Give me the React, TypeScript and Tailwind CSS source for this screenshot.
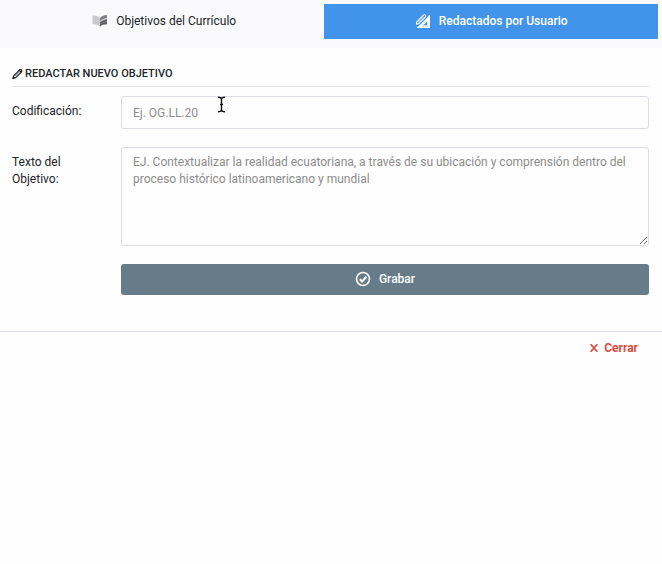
import type { ReactNode } from 'react';

function BookIcon() {
  return (
    <svg viewBox="0 0 16 14" className="w-4 h-3.5" aria-hidden="true">
      <path d="M.5 1.500C3.500 1.500 6 2 8 4v8.500C6 10.800 3.500 10.300.5 10.300z" fill="#c9c9c9" />
      <path d="M8 4c1.700-2 4-2.700 7-3v3C12 4.500 10 5.500 8 7.200z" fill="#808080" />
      <path d="M8 7.200C10 5.500 12 4.500 15 4v1.200C12 5.700 10 6.700 8 8.300z" fill="#c0c0c0" />
      <path d="M8 8.300C10 6.700 12 5.700 15 5.200v5.100C12 10.300 9.800 11 8 12.700z" fill="#5c5c5c" />
      <path d="M8.300 10.300C10.500 8.700 12.500 8 15 7.800" fill="none" stroke="#a0a0a0" strokeWidth="0.600" />
    </svg>
  );
}

function RulerIcon() {
  return (
    <svg viewBox="0 0 16 16" className="w-4 h-4" aria-hidden="true">
      <path fillRule="evenodd" d="M15 1.500V15H1.500zM12.300 8 8.300 12.200h4z" fill="#ffffff" />
      <path d="M1.800 9.300 8.900 2.200a1.300 1.300 0 0 1 1.900 1.900L4.200 10.600l-2.600.9z" fill="#4194ea" stroke="#4194ea" strokeWidth="2.800" />
      <path d="M1.800 8.800 8.400 2.200a1.300 1.300 0 0 1 1.900 1.900L3.900 10.400l-2.500.8z" fill="none" stroke="#ffffff" strokeWidth="1.100" strokeLinejoin="round" />
      <path d="M3.400 9 8.800 3.600" stroke="#ffffff" strokeWidth="0.600" />
      <path d="M12.300 13.600v-.9M10.300 13.600v-.9M8.300 13.600v-.9" stroke="#4194ea" strokeWidth="0.600" />
    </svg>
  );
}

function PencilIcon() {
  return (
    <svg viewBox="0 0 12 12" className="w-3 h-3" fill="none" stroke="#212529" strokeLinejoin="round" aria-hidden="true">
      <path d="M1 10.500 1.700 7.800 7.600 1.900a1.200 1.200 0 0 1 1.900 1.900L3.700 9.700z" strokeWidth="1.200" />
      <path d="M3.300 8.100 7.600 3.800" strokeWidth="0.600" />
      <path d="M6.900 2.600 8.800 4.500 9.500 3.800 7.700 1.900z" fill="#212529" strokeWidth="0.500" />
      <path d="m.700 10.700.6-2L2.700 10.100z" fill="#212529" strokeWidth="0.500" />
    </svg>
  );
}

function CheckIcon() {
  return (
    <svg viewBox="0 0 16 16" className="w-4 h-4" fill="none" stroke="#ffffff" aria-hidden="true">
      <circle cx="8" cy="8" r="6.500" strokeWidth="1.600" />
      <path d="m4.800 8.200 2.300 2.300 4.400-4.700" strokeWidth="2" />
    </svg>
  );
}

function CloseIcon() {
  return (
    <svg viewBox="0 0 8 8" className="w-2 h-2" fill="none" stroke="#df4a40" aria-hidden="true">
      <path d="m.600.200 6.800 7.600M7.400.200.600 7.800" strokeWidth="1.700" />
    </svg>
  );
}

function TextCursor() {
  return (
    <svg viewBox="0 0 9 17" className="absolute left-24 top-0 w-[9px] h-[17px] pointer-events-none" fill="none" stroke="#111111" strokeWidth="1.400" aria-hidden="true">
      <path d="M1 1.200c2 0 3.500.500 3.500 2v10.600c0 1.500-1.500 2-3.500 2M8 1.200c-2 0-3.500.500-3.500 2v10.600c0 1.500 1.500 2 3.500 2M3 8.500h3" />
    </svg>
  );
}

function Tab({ active, icon, children }: { active?: boolean; icon: ReactNode; children: ReactNode }) {
  return (
    <button
      type="button"
      role="tab"
      aria-selected={!!active}
      className={
        active
          ? 'flex h-[35px] items-center justify-center gap-2 bg-[#4194ea] pb-0.5 font-medium text-white'
          : 'flex h-[35px] items-center justify-center gap-2 pb-0.5 text-[#212529]'
      }
    >
      {icon}
      <span>{children}</span>
    </button>
  );
}

export default function App() {
  return (
    <div className="min-h-screen bg-[#fefefe] font-['Roboto',sans-serif] text-xs text-[#212529]">
      {/* Pestañas */}
      <div role="tablist" className="grid grid-cols-[24fr_25fr] bg-[#fafafc] px-1 pt-1 pb-[9px]">
        <Tab icon={<BookIcon />}>Objetivos del Currículo</Tab>
        <Tab active icon={<RulerIcon />}>Redactados por Usuario</Tab>
      </div>

      {/* Formulario */}
      <form className="px-3 pt-4 pb-9" onSubmit={(e) => e.preventDefault()}>
        <h2 className="flex items-center gap-px border-b border-[#e2e4e8] pt-0.5 pb-1 text-[11px] leading-4 font-medium">
          <PencilIcon />
          REDACTAR NUEVO OBJETIVO
        </h2>

        <div className="mt-[9px] grid grid-cols-[109px_1fr] gap-y-[18px] pr-px">
          <label htmlFor="codigo" className="pt-[7px] leading-[17px]">Codificación:</label>
          <div className="relative">
            <input
              id="codigo"
              type="text"
              placeholder="Ej. OG.LL.20"
              className="block h-[33px] w-full rounded-[3px] border border-[#dadce7] px-[11px] outline-none placeholder:text-[#8c8c8c]"
            />
            <TextCursor />
          </div>

          <label htmlFor="texto" className="pt-[7px] pr-12 leading-[17px]">Texto del Objetivo:</label>
          <textarea
            id="texto"
            placeholder="EJ. Contextualizar la realidad ecuatoriana, a través de su ubicación y comprensión dentro del proceso histórico latinoamericano y mundial"
            className="block h-[99px] w-full resize rounded-[3px] border border-[#dadce7] px-[11px] py-1.5 leading-[17px] outline-none placeholder:text-[#8c8c8c]"
          />

          <button
            type="submit"
            className="col-start-2 flex h-[31px] items-center justify-center gap-2 rounded-[3px] bg-[#667c89] pb-0.5 font-medium text-white"
          >
            <CheckIcon />
            Grabar
          </button>
        </div>
      </form>

      {/* Pie */}
      <div className="flex justify-end border-t border-[#dfdfe7] px-6 pt-2">
        <button type="button" className="flex items-center gap-1.5 leading-4 font-bold text-[#df4a40]">
          <CloseIcon />
          Cerrar
        </button>
      </div>
    </div>
  );
}
